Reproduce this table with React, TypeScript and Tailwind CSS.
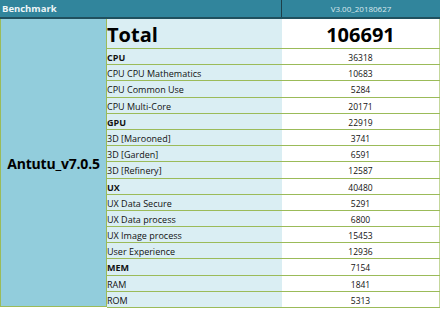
const rows: { label: string; value: string; bold?: boolean }[] = [
  { label: "CPU", value: "36318", bold: true },
  { label: "CPU CPU Mathematics", value: "10683" },
  { label: "CPU Common Use", value: "5284" },
  { label: "CPU Multi-Core", value: "20171" },
  { label: "GPU", value: "22919", bold: true },
  { label: "3D [Marooned]", value: "3741" },
  { label: "3D [Garden]", value: "6591" },
  { label: "3D [Refinery]", value: "12587" },
  { label: "UX", value: "40480", bold: true },
  { label: "UX Data Secure", value: "5291" },
  { label: "UX Data process", value: "6800" },
  { label: "UX Image process", value: "15453" },
  { label: "User Experience", value: "12936" },
  { label: "MEM", value: "7154", bold: true },
  { label: "RAM", value: "1841" },
  { label: "ROM", value: "5313" },
];

export default function App() {
  return (
    <div
      className="w-[440px] h-[309px] bg-white text-black overflow-hidden"
      style={{ fontFamily: '"Open Sans", "Liberation Sans", sans-serif' }}
    >
      {/* header */}
      <div className="flex h-[19px] bg-[#31859c] border-b-2 border-[#20505e]">
        <div className="w-[281px] pl-[2px] text-[9.5px] font-bold text-[#eef6f8] leading-[17px]">
          Benchmark
        </div>
        <div className="flex-1 border-l border-[#1d3f49] text-center text-[8px] text-[#dbe9ee] leading-[17px]">
          V3.00_20180627
        </div>
      </div>

      <div className="flex">
        <div className="w-[107px] h-[288px] bg-[#92cddc] border-l border-r border-b border-[#9bbb59] flex items-center justify-center">
          <span className="text-[14px] font-bold tracking-[-0.2px] pt-[2px]">Antutu_v7.0.5</span>
        </div>
        <div className="flex-1 flex flex-col">
          <div className="flex h-[30px] border-b border-[#9bbb59]">
            <div className="w-[175px] bg-[#daeef3] text-[20px] font-bold leading-[32px]">Total</div>
            <div className="flex-1 border-r border-[#c4d79b] text-center text-[20px] font-bold leading-[32px]">
              106691
            </div>
          </div>
          {rows.map((r) => (
            <div key={r.label} className="flex h-[16.2px] border-b border-[#9bbb59]">
              <div
                className={`w-[175px] bg-[#daeef3] text-[9px] leading-[17px] text-[#111] ${r.bold ? "font-bold" : ""}`}
              >
                {r.label}
              </div>
              <div className="flex-1 border-r border-[#c4d79b] text-center text-[8.5px] leading-[17px] text-[#111]">
                {r.value}
              </div>
            </div>
          ))}
        </div>
      </div>
    </div>
  );
}
